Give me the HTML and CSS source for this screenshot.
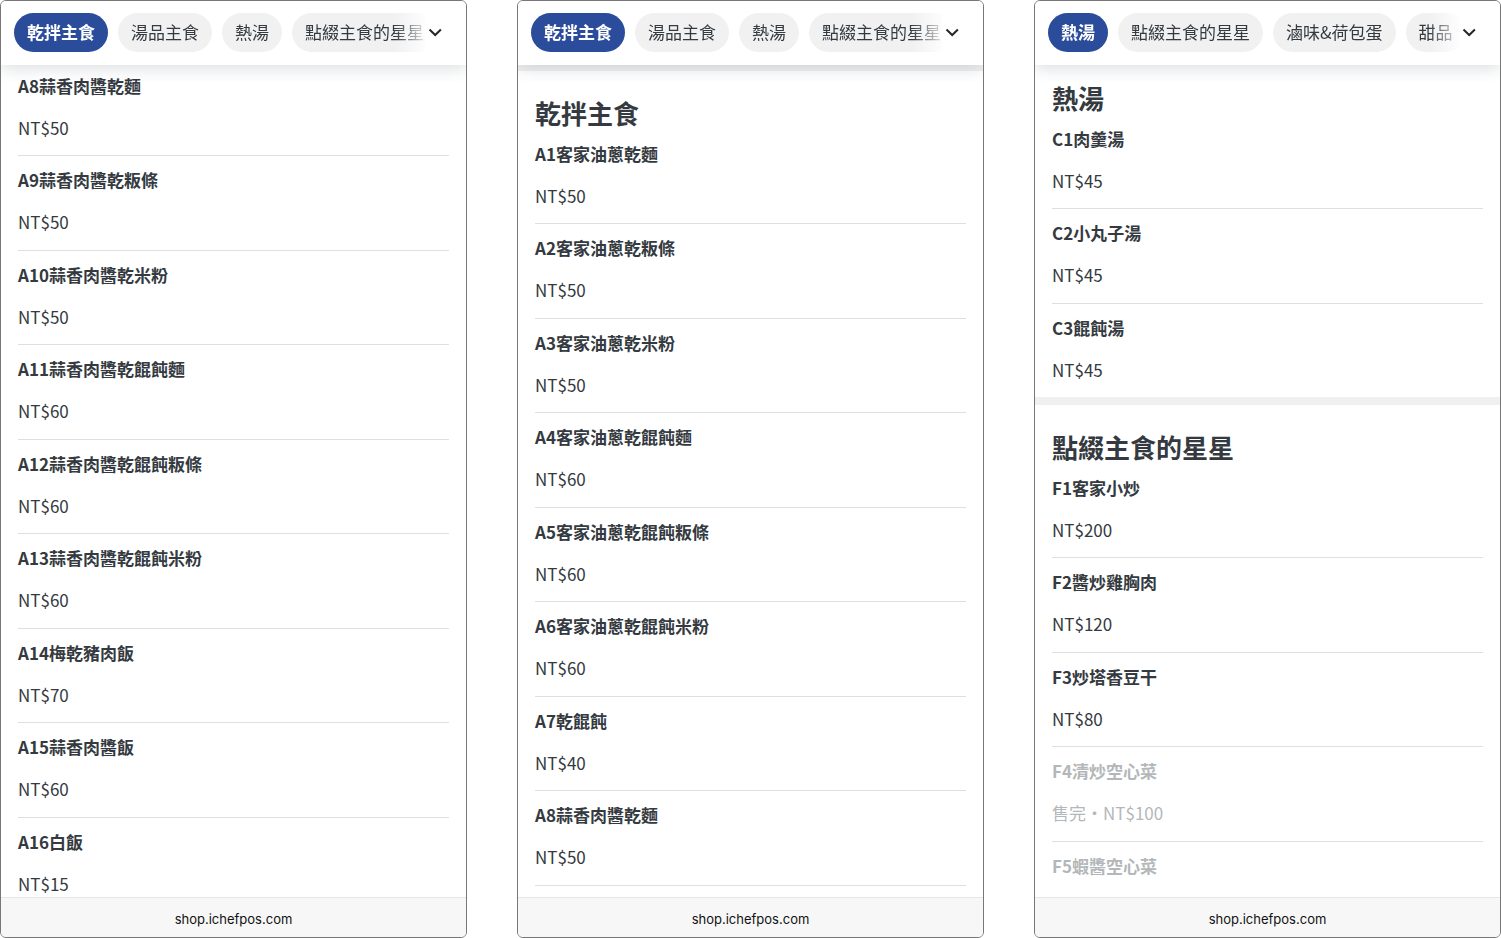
FILE: index.html
```html
<!DOCTYPE html>
<html lang="zh-Hant">
<head>
<meta charset="utf-8">
<meta name="viewport" content="width=device-width, initial-scale=1">
<title>線上菜單</title>
<link rel="stylesheet" href="styles.css">
</head>

<body>
<main class="screens">

	<div class="screen">
		<header class="topbar">
			<nav class="tabs">
				<button type="button" class="tab active">乾拌主食</button>
				<button type="button" class="tab">湯品主食</button>
				<button type="button" class="tab">熱湯</button>
				<button type="button" class="tab">點綴主食的星星</button>
			</nav>
			<button type="button" class="more" aria-label="展開分類">
				<svg width="14" height="9" viewBox="0 0 14 9"><path d="M1.5 1.5 L7.2 7 L12.9 1.5"/></svg>
			</button>
		</header>
		<div class="menu">
			<section class="section from-list">
				<ul class="items">
					<li><h3>A8蒜香肉醬乾麵</h3><p>NT$50</p></li>
					<li><h3>A9蒜香肉醬乾粄條</h3><p>NT$50</p></li>
					<li><h3>A10蒜香肉醬乾米粉</h3><p>NT$50</p></li>
					<li><h3>A11蒜香肉醬乾餛飩麵</h3><p>NT$60</p></li>
					<li><h3>A12蒜香肉醬乾餛飩粄條</h3><p>NT$60</p></li>
					<li><h3>A13蒜香肉醬乾餛飩米粉</h3><p>NT$60</p></li>
					<li><h3>A14梅乾豬肉飯</h3><p>NT$70</p></li>
					<li><h3>A15蒜香肉醬飯</h3><p>NT$60</p></li>
					<li><h3>A16白飯</h3><p>NT$15</p></li>
				</ul>
			</section>
		</div>
		<footer class="address"><a href="#">shop.ichefpos.com</a></footer>
	</div>

	<div class="screen">
		<header class="topbar">
			<nav class="tabs">
				<button type="button" class="tab active">乾拌主食</button>
				<button type="button" class="tab">湯品主食</button>
				<button type="button" class="tab">熱湯</button>
				<button type="button" class="tab">點綴主食的星星</button>
			</nav>
			<button type="button" class="more" aria-label="展開分類">
				<svg width="14" height="9" viewBox="0 0 14 9"><path d="M1.5 1.5 L7.2 7 L12.9 1.5"/></svg>
			</button>
		</header>
		<div class="menu">
			<section class="section from-divider">
				<h2>乾拌主食</h2>
				<ul class="items">
					<li><h3>A1客家油蔥乾麵</h3><p>NT$50</p></li>
					<li><h3>A2客家油蔥乾粄條</h3><p>NT$50</p></li>
					<li><h3>A3客家油蔥乾米粉</h3><p>NT$50</p></li>
					<li><h3>A4客家油蔥乾餛飩麵</h3><p>NT$60</p></li>
					<li><h3>A5客家油蔥乾餛飩粄條</h3><p>NT$60</p></li>
					<li><h3>A6客家油蔥乾餛飩米粉</h3><p>NT$60</p></li>
					<li><h3>A7乾餛飩</h3><p>NT$40</p></li>
					<li><h3>A8蒜香肉醬乾麵</h3><p>NT$50</p></li>
				</ul>
			</section>
		</div>
		<footer class="address"><a href="#">shop.ichefpos.com</a></footer>
	</div>

	<div class="screen">
		<header class="topbar">
			<nav class="tabs">
				<button type="button" class="tab active">熱湯</button>
				<button type="button" class="tab">點綴主食的星星</button>
				<button type="button" class="tab">滷味&amp;荷包蛋</button>
				<button type="button" class="tab">甜品</button>
			</nav>
			<button type="button" class="more" aria-label="展開分類">
				<svg width="14" height="9" viewBox="0 0 14 9"><path d="M1.5 1.5 L7.2 7 L12.9 1.5"/></svg>
			</button>
		</header>
		<div class="menu">
			<section class="section from-title">
				<h2>熱湯</h2>
				<ul class="items">
					<li><h3>C1肉羹湯</h3><p>NT$45</p></li>
					<li><h3>C2小丸子湯</h3><p>NT$45</p></li>
					<li><h3>C3餛飩湯</h3><p>NT$45</p></li>
				</ul>
			</section>
			<section class="section">
				<h2>點綴主食的星星</h2>
				<ul class="items">
					<li><h3>F1客家小炒</h3><p>NT$200</p></li>
					<li><h3>F2醬炒雞胸肉</h3><p>NT$120</p></li>
					<li><h3>F3炒塔香豆干</h3><p>NT$80</p></li>
					<li class="soldout"><h3>F4清炒空心菜</h3><p>售完・NT$100</p></li>
					<li class="soldout"><h3>F5蝦醬空心菜</h3></li>
				</ul>
			</section>
		</div>
		<footer class="address"><a href="#">shop.ichefpos.com</a></footer>
	</div>

</main>
</body>
</html>
```

FILE: styles.css
```css
*{
	box-sizing: border-box;
}
body{
	margin: 0;
	background: #fff;
	color: #343a40;
	font-family: "Noto Sans CJK TC", "Noto Sans", sans-serif;
	font-size: 17px;
	line-height: 24px;
}
h2, h3, p, ul{
	margin: 0;
	padding: 0;
}
button{
	font: inherit;
	color: inherit;
	border: 0;
	cursor: pointer;
}

.screens{
	display: grid;
	grid-template-columns: repeat(3, minmax(0, 1fr));
	gap: 50px;
	height: 100vh;
}
.screen{
	display: flex;
	flex-direction: column;
	min-height: 0;
	border: 1px solid #777;
	border-radius: 6px;
	overflow: hidden;
}

/* category bar */
.topbar{
	display: flex;
	flex: none;
	position: relative;
	z-index: 1;
	padding: 12px 0 13px;
	background: #fff;
	box-shadow: 0 4px 14px rgba(52, 64, 76, 0.16);
}
.tabs{
	display: flex;
	flex: 1;
	gap: 10px;
	min-width: 0;
	padding-left: 13px;
	overflow: hidden;
	-webkit-mask-image: linear-gradient(to left, rgba(0,0,0,0.15), #000 30px);
	mask-image: linear-gradient(to left, rgba(0,0,0,0.15), #000 30px);
}
.tab{
	flex: none;
	height: 39px;
	padding: 0 13px 2px;
	border-radius: 20px;
	background: #f1f1f1;
	white-space: nowrap;
}
.tab.active{
	background: #2b4c9b;
	color: #fff;
	font-weight: bold;
}
.more{
	flex: none;
	width: 41px;
	padding: 0 0 0 3px;
	background: none;
	text-align: left;
}
.more svg{
	display: block;
	fill: none;
	stroke: #23282d;
	stroke-width: 2;
}

/* menu */
.menu{
	flex: 1;
	min-height: 0;
	overflow: hidden;
}
.section{
	border-top: 8px solid #f0f0f0;
	padding: 26px 17px 0;
}
.section h2{
	margin-bottom: 1px;
	font-size: 26px;
	line-height: 32px;
}
.items{
	list-style: none;
}
.items li{
	min-height: 94px;
	padding: 12px 0 14px;
	border-bottom: 1px solid #dedfe0;
}
.items li:nth-child(even){
	min-height: 95px;
}
.section:not(:last-child) .items li:last-child{
	min-height: 93px;
	border-bottom: 0;
}
.items h3{
	font-size: 17px;
	line-height: 24px;
	margin-bottom: 18px;
}
.soldout{
	color: #b4b7b9;
}

/* how far each screen is scrolled */
.from-list{
	margin-top: -37px;
}
.from-divider{
	margin-top: -2px;
}
.from-title{
	margin-top: -17px;
}

.address{
	flex: none;
	padding: 9px 0 6px;
	border-top: 1px solid #e6e6e6;
	background: #f7f7f7;
	text-align: center;
	font-family: Inter, "Liberation Sans", sans-serif;
	font-size: 13px;
}
.address a{
	color: #111;
	text-decoration: none;
}
```
